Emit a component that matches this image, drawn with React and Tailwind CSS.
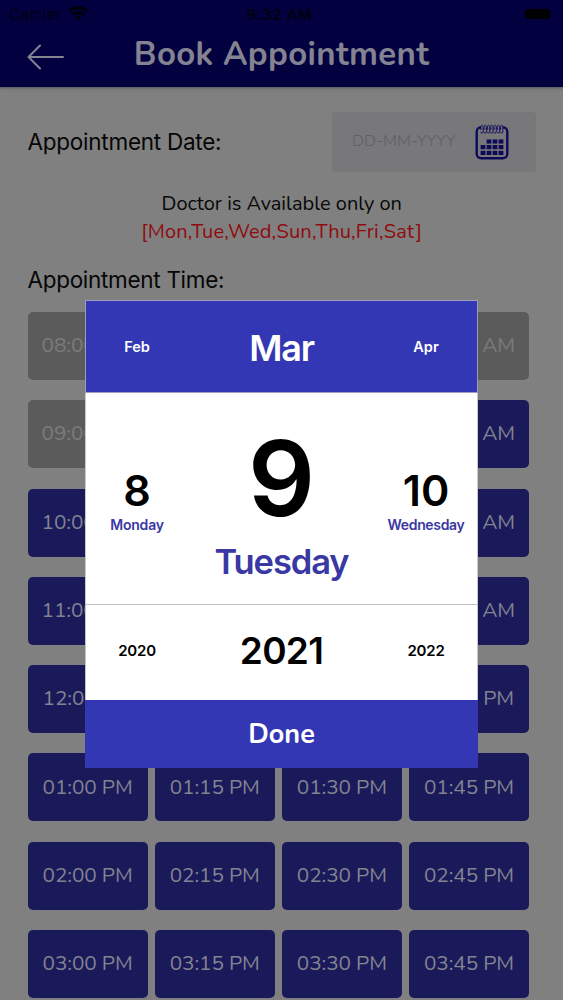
import React from "react";

const nunito = "font-['Nunito','Lato',sans-serif]";
const system = "font-['Inter','Liberation_Sans',sans-serif]";

const hours = ["08", "09", "10", "11", "12", "01", "02", "03"];
const minutes = ["00", "15", "30", "45"];
const slots = hours.flatMap((hour, row) =>
  minutes.map((minute, column) => ({
    label: `${hour}:${minute} ${row < 4 ? "AM" : "PM"}`,
    booked: row === 0 || (row === 1 && column === 0),
  }))
);

function StatusBar() {
  return (
    <div className={`${system} grid h-[28px] grid-cols-3 items-center pl-[9px] pr-[13px] text-[15px] leading-none text-[#00000f]`}>
      <div className="flex items-center gap-[6px]">
        <span className="tracking-[0.6px]">Carrier</span>
        <svg className="-mt-[2px]" width="21" height="15" viewBox="0 0 21 15" fill="none" stroke="#000008" strokeWidth="3">
          <path d="M1.2 5.2C6.6.5 14.4.5 19.8 5.2" />
          <path d="M4.6 8.9c3.4-3 8.4-3 11.8 0" />
          <path d="M7.3 11.1c1.9-1.5 4.5-1.5 6.4 0l-3.2 3.4z" fill="#000008" stroke="none" />
        </svg>
      </div>
      <span className="text-center font-semibold tracking-[0.6px]">9:32 AM</span>
      <span className="-mt-[1px] h-[10px] w-[25px] justify-self-end rounded-[3px] bg-black" />
    </div>
  );
}

function Header() {
  return (
    <header className="h-[87px] bg-[#03003f] shadow-[0_1px_3px_rgba(0,0,0,0.35)]">
      <StatusBar />
      <div className="grid h-[56px] grid-cols-[100px_1fr_100px] items-center">
        <svg className="ml-[27px] mt-[2px]" width="38" height="26" viewBox="0 0 38 26" fill="none" stroke="#838391" strokeWidth="2" strokeLinecap="round" strokeLinejoin="round">
          <path d="M36 13H1.5M13 1.5 1.5 13 13 24.5" />
        </svg>
        <h1 className={`${nunito} -mt-[3px] whitespace-nowrap text-center text-[33px] font-bold leading-none tracking-[0.35px] text-[#838391]`}>
          Book Appointment
        </h1>
      </div>
    </header>
  );
}

function CalendarIcon() {
  return (
    <svg width="34" height="36" viewBox="0 0 34 36" fill="none">
      <rect x="1.7" y="3.2" width="30.6" height="31" rx="4.5" stroke="#0d0a59" strokeWidth="2.4" />
      <path d="M6 3.2h22" stroke="#78787a" strokeWidth="3" />
      {[6.2, 9.5, 12.8, 16.1, 19.4, 22.7, 26].map((x) => (
        <path key={x} d={`M${x - 0.4} 6V3c0-2.4 2.3-2.4 2.3 0v4.8c0 1.8-2.4 1.8-2.4 0`} stroke="#0d0a59" strokeWidth="0.9" />
      ))}
      <g fill="#0d0a59">
        {[11.6, 17.6, 23.6].map((x) => <rect key={x} x={x} y="15.4" width="4.8" height="4.2" />)}
        {[21, 26.8].map((y) =>
          [5.6, 11.6, 17.6, 23.6].map((x) => <rect key={`${x}-${y}`} x={x} y={y} width="4.8" height="4.2" />)
        )}
      </g>
    </svg>
  );
}

function DatePicker() {
  return (
    <section className={`${system} absolute left-[85px] top-[300px] flex h-[468px] w-[393px] flex-col bg-white font-semibold leading-none text-black`}>
      <div className="grid h-[93px] shrink-0 grid-cols-[102px_1fr_102px] items-center border border-[#9c9cc0] bg-[#3337b3] pt-[2px] text-center text-[14.5px] text-white">
        <span>Feb</span>
        <span className="text-[36px] tracking-[-1.2px]">Mar</span>
        <span>Apr</span>
      </div>
      <div className="grid h-[211px] shrink-0 grid-cols-[102px_1fr_102px] border-x border-[#c9c9cc] text-center">
        <div className="pt-[76px]">
          <div className="text-[43px]">8</div>
          <div className="mt-[6px] text-[14px] tracking-[-0.2px] text-[#3a38a3]">Monday</div>
        </div>
        <div className="pt-[32px]">
          <div className="text-[105px]">9</div>
          <div className="mt-[15px] text-[34.5px] tracking-[-1.1px] text-[#3a38a3]">Tuesday</div>
        </div>
        <div className="pt-[76px]">
          <div className="text-[43px]">10</div>
          <div className="mt-[6px] text-[14px] tracking-[-0.35px] text-[#3a38a3]">Wednesday</div>
        </div>
      </div>
      <div className="grid h-[96px] shrink-0 grid-cols-[102px_1fr_102px] items-center border-x border-t border-[#c4c4c4] pb-[4px] text-center text-[15px]">
        <span className="tracking-[-0.2px]">2020</span>
        <span className="text-[37px] tracking-[-0.7px]">2021</span>
        <span className="tracking-[-0.2px]">2022</span>
      </div>
      <button className={`${nunito} flex-1 bg-[#3337b3] text-[27px] font-bold leading-none text-white`}>Done</button>
    </section>
  );
}

export default function App() {
  return (
    <div className={`${nunito} relative h-[1000px] w-[563px] overflow-hidden bg-[#808080]`}>
      <Header />
      <main className="pl-[27.5px] pr-[27px]">
        <div className={`${system} flex h-[109px] items-center justify-between`}>
          <h2 className="pt-[2px] text-[22.5px] leading-none tracking-[-0.25px] text-[#060606]">Appointment Date:</h2>
          <div className={`${nunito} flex h-[60px] w-[204px] items-center justify-between rounded-[4px] bg-[#78787a] pl-[20px] pr-[27px]`}>
            <span className="text-[16.5px] font-light leading-none tracking-[-0.05px] text-[#606062]">DD-MM-YYYY</span>
            <CalendarIcon />
          </div>
        </div>
        <div className="h-[56px] -translate-y-[6px] text-center text-[20px] leading-[28px] text-[#080808]">
          <p>Doctor is Available only on</p>
          <p className="tracking-[0.17px] text-[#900b0e]">[Mon,Tue,Wed,Sun,Thu,Fri,Sat]</p>
        </div>
        <div className="flex h-[60px] items-center pb-[4px]">
          <h2 className={`${system} text-[22.5px] leading-none tracking-[-0.3px] text-[#060606]`}>Appointment Time:</h2>
        </div>
        <div className="grid w-[501.5px] grid-cols-4 gap-x-[7px] gap-y-[20.3px]">
          {slots.map(({ label, booked }) => (
            <div
              key={label}
              className={`flex h-[68px] items-center justify-center whitespace-nowrap rounded-[5px] pb-[1px] text-[20.75px] leading-none tracking-[-0.1px] ${
                booked ? "bg-[#5b5b5b] text-[#7c7c7c]" : "bg-[#1a1a5a] text-[#838391]"
              }`}
            >
              {label}
            </div>
          ))}
        </div>
      </main>
      <DatePicker />
    </div>
  );
}
